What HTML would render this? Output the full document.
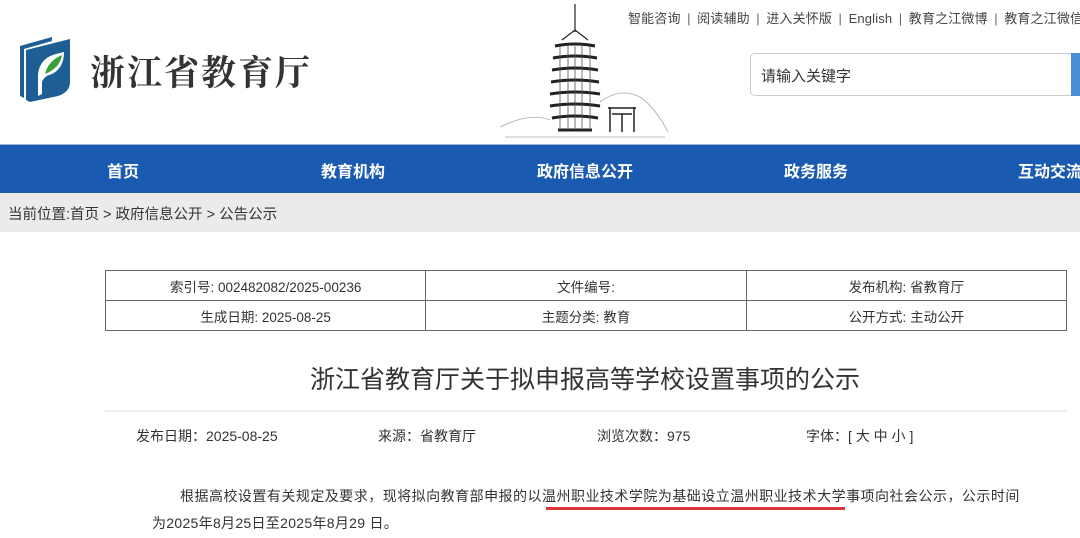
<!DOCTYPE html>
<html><head><meta charset="utf-8"><style>
*{margin:0;padding:0;box-sizing:border-box}
body{width:1080px;height:538px;overflow:hidden;background:#fff;font-family:"Liberation Sans","Noto Sans CJK SC",sans-serif;color:#333;position:relative}
.a{position:absolute;white-space:nowrap}
.top{top:8px;left:628px;font-size:13px;color:#444;letter-spacing:0.15px}
.top span{color:#666;margin:0 6.5px}
.search{left:750px;top:53px;width:340px;height:43px;border:1px solid #ccc;border-radius:5px;font-size:15px;color:#333;padding:11px 10px}
.btn{left:1071px;top:53px;width:20px;height:43px;background:#4a8fd8}
.nav{left:0;top:144px;width:1080px;height:49px;background:#1a5ab0;border-top:1px solid #9bb6da}
.nav div{position:absolute;top:13px;color:#fff;font-weight:bold;font-size:16px;transform:translateX(-50%)}
.bc{left:0;top:193px;width:1080px;height:39px;background:#ebebeb;font-size:14.5px;color:#333;padding:10px 8px}
table{position:absolute;left:105px;top:270px;width:962px;border-collapse:collapse;font-size:13.5px;color:#333}
td{border:1px solid #666;height:30px;text-align:center;width:33.3%}
.title{left:0;width:1170px;text-align:center;top:360px;font-size:25px;color:#333}
.hr{left:105px;top:410px;width:962px;height:2px;background:#eee}
.meta{top:426px;font-size:14px;color:#333}
.p{font-size:14px;color:#333}
</style></head><body>
<svg class="a" style="left:18px;top:36px" width="56" height="66" viewBox="0 0 56 66">
<path d="M2 10 L34 1 L34 5 L6 13 L6 62 L2 60 Z" fill="#1d5e94"/>
<path d="M8 14 L52 3 L52 46 Q52 56 40 60 L12 66 L8 64 Z" fill="#1d5e94"/>
<path d="M20 60 L20 38 Q22 22 38 18 L46 16 Q46 32 34 38 Q26 40 24 46 L24 58 Z" fill="#fff"/>
<path d="M27 38 Q30 25 44 19 Q42 32 27 38 Z" fill="#3aa03a"/>
</svg>
<div class="a" style="left:90px;top:46px;font-size:35px;font-weight:bold;color:#333;font-family:'Noto Serif CJK SC',serif;letter-spacing:2px">浙江省教育厅</div>
<svg class="a" style="left:500px;top:2px" width="170" height="140" viewBox="0 0 170 140" fill="none" stroke="#222" stroke-width="1.2">
<line x1="75" y1="2" x2="75" y2="30"/>
<path d="M62 38 L75 28 L88 38"/>
<g stroke-width="3">
<path d="M55 44 Q75 40 95 44"/><path d="M53 56 Q75 52 97 56"/><path d="M52 68 Q75 64 98 68"/><path d="M51 80 Q75 76 99 80"/><path d="M50 92 Q75 88 100 92"/><path d="M50 104 Q75 100 100 104"/><path d="M52 116 Q75 112 98 116"/><path d="M58 128 H92"/>
</g>
<path d="M60 44 V128 M90 44 V128 M68 44 V128 M82 44 V128 M75 44 V128" stroke-width="0.8" stroke="#555"/>
<path d="M0 125 Q30 110 50 118 M100 100 Q120 85 140 95 Q155 105 168 130 M5 135 H165" stroke="#aaa" stroke-width="0.8"/>
<path d="M110 105 V130 M134 105 V130 M108 106 H136 M112 112 H132 M122 112 V130" stroke-width="1.5"/>
</svg>
<div class="a top">智能咨询<span>|</span>阅读辅助<span>|</span>进入关怀版<span>|</span>English<span>|</span>教育之江微博<span>|</span>教育之江微信</div>
<div class="a search">请输入关键字</div>
<div class="a btn"></div>
<div class="a nav"><div style="left:123px">首页</div><div style="left:353px">教育机构</div><div style="left:585px">政府信息公开</div><div style="left:816px">政务服务</div><div style="left:1050px">互动交流</div></div>
<div class="a bc">当前位置:首页 &gt; 政府信息公开 &gt; 公告公示</div>
<table><tr><td>索引号: 002482082/2025-00236</td><td>文件编号:</td><td>发布机构: 省教育厅</td></tr><tr><td>生成日期: 2025-08-25</td><td>主题分类: 教育</td><td>公开方式: 主动公开</td></tr></table>
<div class="a title">浙江省教育厅关于拟申报高等学校设置事项的公示</div>
<div class="a hr"></div>
<div class="a meta" style="left:136px">发布日期：2025-08-25</div>
<div class="a meta" style="left:378px">来源：省教育厅</div>
<div class="a meta" style="left:597px">浏览次数：975</div>
<div class="a meta" style="left:806px">字体：[ 大 中 小 ]</div>
<div class="a p" style="left:180px;top:486px;letter-spacing:0.48px">根据高校设置有关规定及要求，现将拟向教育部申报的以温州职业技术学院为基础设立温州职业技术大学事项向社会公示，公示时间</div>
<div class="a" style="left:546px;top:507px;width:299px;height:3px;background:#d9363e"></div>
<div class="a p" style="left:152px;top:513px;letter-spacing:0.3px">为2025年8月25日至2025年8月29 日。</div>
</body></html>
